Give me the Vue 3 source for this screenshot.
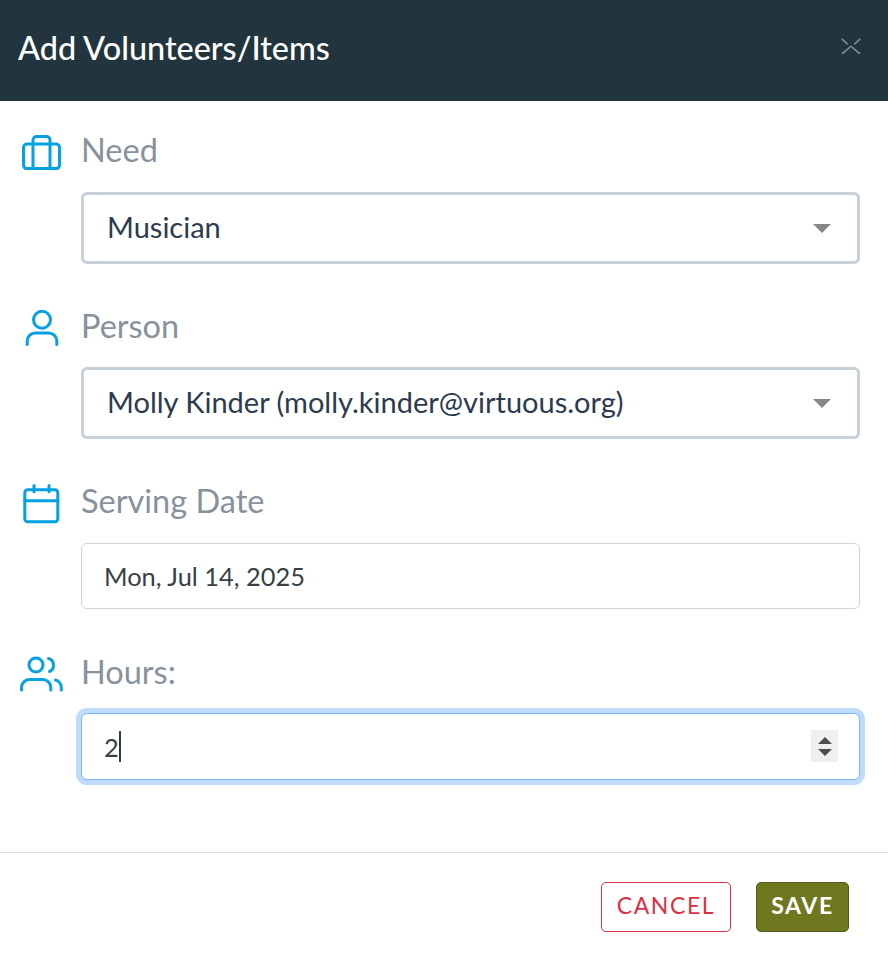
<template>
  <div class="modal">
    <header class="modal-header">
      <h1>Add Volunteers/Items</h1>
      <svg class="close" width="20" height="17" viewBox="0 0 20 17" fill="none" stroke="#7f8a90" stroke-width="1.6">
        <path d="M.8 .8l6 5.500M19.200 .8l-6 5.500" />
        <path d="M.8 14.500l1.200 .7L10 8.200l8 7 1.200-.7" />
      </svg>
    </header>

    <div class="modal-body">
      <section class="field field-need">
        <svg class="icon" width="42" height="40" viewBox="0 0 42 40" fill="none" stroke="#05a1e0" stroke-width="3" stroke-linejoin="round">
          <rect x="3.500" y="14" width="36" height="24.600" rx="3.500" />
          <path d="M13 14v24.600M30 14v24.600" />
          <path d="M13 14v-4a3.600 3.600 0 0 1 3.600-3.600h9.800A3.600 3.600 0 0 1 30 10v4" />
        </svg>
        <label>Need</label>
        <div class="select">
          <span>Musician</span>
          <i class="caret"></i>
        </div>
      </section>

      <section class="field field-person">
        <svg class="icon" width="42" height="40" viewBox="0 0 42 40" fill="none" stroke="#05a1e0" stroke-width="3" stroke-linecap="round">
          <circle cx="22" cy="13.700" r="8.500" />
          <path d="M7.200 38.500V35a8 8 0 0 1 8-8h13.600a8 8 0 0 1 8 8v3.500" />
        </svg>
        <label>Person</label>
        <div class="select select-person">
          <span>Molly Kinder (molly.kinder@virtuous.org)</span>
          <i class="caret"></i>
        </div>
      </section>

      <section class="field field-date">
        <svg class="icon icon-tall" width="42" height="46" viewBox="0 0 42 46" fill="none" stroke="#05a1e0" stroke-width="3" stroke-linecap="round" stroke-linejoin="round">
          <rect x="4.800" y="11.800" width="33" height="32" rx="3" />
          <path d="M4.800 22.700h33M14 7.500v6.300M29 7.500v6.300" />
        </svg>
        <label>Serving Date</label>
        <div class="input input-date">Mon, Jul 14, 2025</div>
      </section>

      <section class="field field-hours">
        <svg class="icon" width="46" height="40" viewBox="0 0 46 40" fill="none" stroke="#05a1e0" stroke-width="3" stroke-linecap="round">
          <circle cx="16" cy="13" r="7" />
          <path d="M1.500 38v-2.500a8 8 0 0 1 8-8h13.300a8 8 0 0 1 8 8V38" />
          <path d="M28.500 6.500a6.200 6.800 0 0 1 1 13" />
          <path d="M35.500 28a7.500 8 0 0 1 5.800 8v2" />
        </svg>
        <label>Hours:</label>
        <div class="input input-focus">
          <span class="value">2</span><span class="text-cursor"></span>
          <div class="spin">
            <i class="up"></i>
            <i class="down"></i>
          </div>
        </div>
      </section>
    </div>

    <footer class="modal-footer">
      <button class="btn btn-cancel">CANCEL</button>
      <button class="btn btn-save">SAVE</button>
    </footer>
  </div>
</template>

<script setup>
</script>

<style>
html,
body {
  margin: 0;
  background: #fff;
}
</style>

<style scoped>
.modal {
  width: 888px;
  height: 956px;
  display: flex;
  flex-direction: column;
  font-family: Lato, "Liberation Sans", sans-serif;
  background: #fff;
  overflow: hidden;
}
.modal-header {
  height: 101px;
  box-sizing: border-box;
  flex: none;
  display: flex;
  align-items: center;
  justify-content: space-between;
  padding: 0 27px 6px 18px;
  background: #22353f;
  color: #fff;
}
.modal-header h1 {
  margin: 0;
  font-size: 32.400px;
  font-weight: 500;
  line-height: 40px;
}
.close {
  display: block;
  margin-bottom: 3px;
}
.modal-body {
  height: 751px;
  flex: none;
  box-sizing: border-box;
  padding-right: 28px;
}
.field {
  display: grid;
  grid-template-columns: 81px 1fr;
  align-items: center;
}
.field-need {
  padding-top: 29px;
}
.field-person {
  padding-top: 42px;
}
.field-date {
  padding-top: 42px;
}
.field-hours {
  padding-top: 43px;
}
.icon {
  display: block;
  justify-self: start;
  margin-left: 20px;
}
.icon-tall {
  margin-top: -3px;
  margin-bottom: -3px;
}
label {
  font-size: 32.500px;
  line-height: 40px;
  color: #87929c;
}
.select,
.input {
  grid-column: 2;
  display: flex;
  align-items: center;
  box-sizing: border-box;
  background: #fff;
}
.select {
  height: 72px;
  margin-top: 22px;
  padding: 0 26px 4px 23px;
  border: 3px solid #c8d0d7;
  border-radius: 6px;
  font-size: 29px;
  color: #2b3b50;
  justify-content: space-between;
}
.select-person {
  margin-top: 21px;
  padding-bottom: 3px;
}
.caret {
  width: 0;
  height: 0;
  border-left: 9px solid transparent;
  border-right: 9px solid transparent;
  border-top: 9px solid #888;
  margin-top: 4px;
}
.input {
  height: 66px;
  margin-top: 21px;
  padding: 0 22px;
  border: 1px solid #ced4da;
  border-radius: 6px;
  font-size: 25.400px;
  color: #383f46;
}
.input-date {
  margin-top: 22px;
}
.input-focus {
  height: 67px;
  border-color: #7db6f5;
  box-shadow: 0 0 0 5px #bfdcfc;
  position: relative;
}
.text-cursor {
  display: inline-block;
  width: 2px;
  height: 31px;
  background: #33393f;
}
.spin {
  position: absolute;
  top: 16px;
  right: 21px;
  width: 27px;
  height: 32px;
  background: #efefef;
  display: flex;
  flex-direction: column;
  align-items: center;
  justify-content: center;
  gap: 5px;
}
.spin i {
  width: 0;
  height: 0;
  border-left: 7px solid transparent;
  border-right: 7px solid transparent;
}
.spin .up {
  border-bottom: 7px solid #4c4c4c;
}
.spin .down {
  border-top: 7px solid #4c4c4c;
}
.modal-footer {
  flex: 1;
  display: flex;
  justify-content: flex-end;
  align-items: flex-start;
  gap: 25px;
  padding: 29px 39px 0 0;
  border-top: 1px solid #dcdfe2;
}
.btn {
  height: 50px;
  box-sizing: border-box;
  border-radius: 5px;
  font-family: Lato, "Liberation Sans", sans-serif;
  font-size: 23px;
  letter-spacing: 1.600px;
  padding: 0 0 4px;
  cursor: pointer;
}
.btn-cancel {
  width: 130px;
  background: #fff;
  border: 1px solid #dc3045;
  color: #dc3045;
}
.btn-save {
  width: 93px;
  background: #6f781f;
  border: 1px solid #545b16;
  color: #fff;
  font-weight: 700;
}
</style>
